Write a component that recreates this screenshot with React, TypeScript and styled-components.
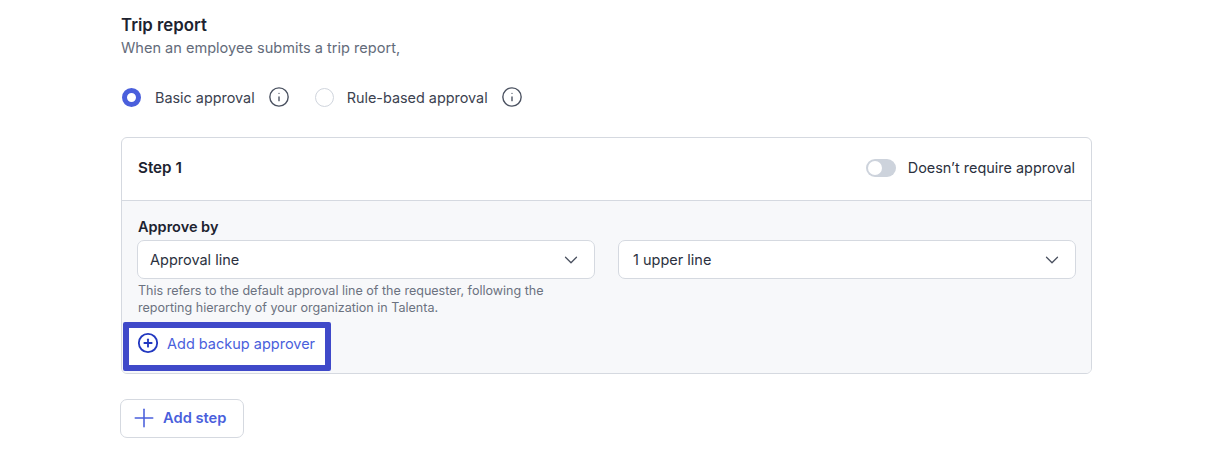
import React from "react";
import styled, { createGlobalStyle } from "styled-components";
import { ChevronDown, Info, Plus, CirclePlus } from "lucide-react";

const GlobalStyle = createGlobalStyle`
  html, body { margin: 0; padding: 0; background: #fff; }
  body { font-family: Inter, "Noto Sans", sans-serif; -webkit-font-smoothing: antialiased; }
`;

const Page = styled.main`
  width: 1000px;
  height: 438px;
  padding: 15px 0 0 121px;
  overflow: hidden;
`;
const Title = styled.h2`
  margin: 0;
  font-size: 16.8px;
  line-height: 20px;
  font-weight: 600;
  color: #1d2330;
`;
const Subtitle = styled.p`
  margin: 3px 0 0;
  font-size: 14.55px;
  line-height: 20px;
  color: #636b7a;
`;
const RadioRow = styled.div`
  display: flex;
  align-items: center;
  height: 24px;
  margin-top: 27px;
`;
const RadioOption = styled.label`
  display: flex;
  align-items: center;
  margin-right: 24px;
  font-size: 14.4px;
  color: #3b4250;
`;
const RadioDot = styled.span<{ $checked?: boolean }>`
  box-sizing: border-box;
  width: 19px;
  height: 19px;
  margin: 0 ${(p) => (p.$checked ? 14 : 13)}px 0 1px;
  border-radius: 50%;
  background: #fff;
  border: ${(p) => (p.$checked ? "5px solid #4a5fdc" : "1.5px solid #d0d5dd")};
`;
const InfoIcon = styled(Info)`
  width: 22px;
  height: 22px;
  margin-left: 13px;
  color: #4a5160;
`;
const Card = styled.section`
  box-sizing: border-box;
  width: 971px;
  height: 237px;
  margin-top: 28px;
  border: 1px solid #d5d9e0;
  border-radius: 6px;
  overflow: hidden;
`;
const CardHeader = styled.header`
  box-sizing: border-box;
  display: flex;
  align-items: center;
  justify-content: space-between;
  height: 63px;
  padding: 0 16px 3px 16px;
  border-bottom: 1px solid #d5d9e0;
`;
const StepTitle = styled.h3`
  margin: 0;
  font-size: 15.2px;
  font-weight: 600;
  color: #1d2330;
`;
const ToggleWrap = styled.div`
  display: flex;
  align-items: center;
  font-size: 14.45px;
  color: #2b3140;
`;
const Toggle = styled.span`
  box-sizing: border-box;
  display: flex;
  align-items: center;
  width: 30px;
  height: 18px;
  margin-right: 12px;
  padding: 2px;
  border-radius: 9px;
  background: #cdd3dc;

  &::before {
    content: "";
    width: 14px;
    height: 14px;
    border-radius: 50%;
    background: #fff;
  }
`;
const CardBody = styled.div`
  box-sizing: border-box;
  height: 173px;
  padding: 16px 15px 0 15px;
  background: #f7f8fa;
`;
const FieldLabel = styled.div`
  margin-left: 1px;
  font-size: 14.5px;
  line-height: 20px;
  font-weight: 600;
  color: #1d2330;
`;
const SelectRow = styled.div`
  display: grid;
  grid-template-columns: 458px 458px;
  column-gap: 23px;
  margin-top: 3px;
`;
const Select = styled.div<{ $inset?: number }>`
  box-sizing: border-box;
  display: flex;
  align-items: center;
  justify-content: space-between;
  height: 39px;
  padding: 0 12px 0 ${(p) => p.$inset ?? 12}px;
  border: 1px solid #d5d9e0;
  border-radius: 7px;
  background: #fff;
  font-size: 14.5px;
  color: #2b3140;

  svg {
    width: 22px;
    height: 22px;
    color: #4a5160;
  }
`;
const Help = styled.p`
  width: 430px;
  margin: 3px 0 0 1px;
  font-size: 12.55px;
  line-height: 17px;
  color: #6b7280;
`;
const BackupBox = styled.div`
  box-sizing: border-box;
  display: flex;
  align-items: center;
  width: 208px;
  height: 49px;
  margin: 6px 0 0 -14px;
  padding: 0 0 7px 8px;
  border: 6px solid #3f49c9;
  border-radius: 2px;
  background: #fff;
  font-size: 14.5px;
  color: #4a5fdc;
`;
const BackupIcon = styled(CirclePlus)`
  width: 22px;
  height: 22px;
  margin-right: 8px;
  color: #2238c0;
`;
const AddStep = styled.button`
  box-sizing: border-box;
  display: flex;
  align-items: center;
  width: 124px;
  height: 39px;
  margin: 25px 0 0 -1px;
  padding: 0 0 1px 8px;
  border: 1px solid #d5d9e0;
  border-radius: 7px;
  background: #fff;
  font-family: inherit;
  font-size: 14.7px;
  font-weight: 600;
  color: #4a5fdc;

  svg {
    width: 30px;
    height: 30px;
    margin-right: 4px;
  }
`;

export default function App() {
  return (
    <Page>
      <GlobalStyle />
      <Title>Trip report</Title>
      <Subtitle>When an employee submits a trip report,</Subtitle>

      <RadioRow>
        <RadioOption>
          <RadioDot $checked />
          Basic approval
          <InfoIcon strokeWidth={1.5} />
        </RadioOption>
        <RadioOption>
          <RadioDot />
          Rule-based approval
          <InfoIcon strokeWidth={1.5} />
        </RadioOption>
      </RadioRow>

      <Card>
        <CardHeader>
          <StepTitle>Step 1</StepTitle>
          <ToggleWrap>
            <Toggle />
            Doesn’t require approval
          </ToggleWrap>
        </CardHeader>
        <CardBody>
          <FieldLabel>Approve by</FieldLabel>
          <SelectRow>
            <Select>
              Approval line
              <ChevronDown strokeWidth={1.4} />
            </Select>
            <Select $inset={14}>
              1 upper line
              <ChevronDown strokeWidth={1.4} />
            </Select>
          </SelectRow>
          <Help>
            This refers to the default approval line of the requester, following the reporting hierarchy of your organization in Talenta.
          </Help>
          <BackupBox>
            <BackupIcon strokeWidth={2} />
            Add backup approver
          </BackupBox>
        </CardBody>
      </Card>

      <AddStep>
        <Plus strokeWidth={1.25} />
        Add step
      </AddStep>
    </Page>
  );
}
